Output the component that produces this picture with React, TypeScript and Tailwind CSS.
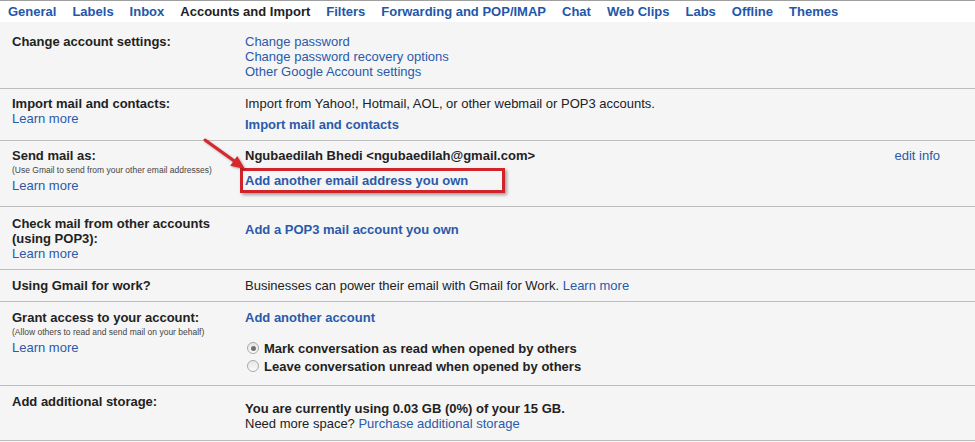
// Gmail settings — "Accounts and Import" tab, with a red annotation
// (arrow + box) pointing at "Add another email address you own".

const LINK = 'text-[#2a5aaa]';

const TABS = [
  'General',
  'Labels',
  'Inbox',
  'Accounts and Import',
  'Filters',
  'Forwarding and POP/IMAP',
  'Chat',
  'Web Clips',
  'Labs',
  'Offline',
  'Themes',
];

function Radio({ checked }: { checked?: boolean }) {
  return (
    <span className="ml-[2px] mr-[5px] inline-flex h-[12px] w-[12px] shrink-0 items-center justify-center rounded-full border border-[#a9a9a9] bg-gradient-to-b from-[#e6e6e6] to-[#fafafa]">
      {checked && <span className="h-[5px] w-[5px] rounded-full bg-[#707070]" />}
    </span>
  );
}

function Arrow() {
  return (
    <svg
      viewBox="0 0 60 45"
      className="pointer-events-none absolute left-[195px] top-[132px] h-[45px] w-[60px] drop-shadow-[1px_1px_1px_rgba(0,0,0,0.35)]"
    >
      <path d="M10 8 L40 29.5" stroke="#d9262b" strokeWidth="3" strokeLinecap="round" />
      <polygon points="50,37 35.2,33.7 42.2,23.9" fill="#d9262b" />
    </svg>
  );
}

export default function App() {
  return (
    <div
      className="relative min-h-screen bg-[#f5f5f5] text-[13px] leading-[15px] text-[#222]"
      style={{ fontFamily: '"Liberation Sans", Arial, sans-serif' }}
    >
      {/* Tab strip */}
      <div className="flex h-[22px] border-t border-[#a0a0a0] bg-white">
        {TABS.map((t) => (
          <span
            key={t}
            className={`px-2 font-bold leading-[21px] ${
              t === 'Accounts and Import' ? 'text-[#222]' : 'text-[#2456a8]'
            }`}
          >
            {t}
          </span>
        ))}
      </div>

      {/* Change account settings */}
      <div className="grid grid-cols-[233px_1fr] pl-3 pr-[35px] pt-[12px] pb-[9px]">
        <div className="font-bold">Change account settings:</div>
        <div className={`flex flex-col ${LINK}`}>
          <span>Change password</span>
          <span>Change password recovery options</span>
          <span>Other Google Account settings</span>
        </div>
      </div>

      {/* Import */}
      <div className="grid grid-cols-[233px_1fr] border-t border-[#bdbdbd] pl-3 pr-[35px] pt-[7px] pb-[8px]">
        <div className="flex flex-col">
          <span className="font-bold">Import mail and contacts:</span>
          <span className={LINK}>Learn more</span>
        </div>
        <div className="flex flex-col">
          <span>Import from Yahoo!, Hotmail, AOL, or other webmail or POP3 accounts.</span>
          <span className={`mt-[6px] font-bold ${LINK}`}>Import mail and contacts</span>
        </div>
      </div>

      {/* Send mail as */}
      <div className="grid grid-cols-[233px_1fr] border-t border-[#bdbdbd] pl-3 pr-[35px] pt-[7px] pb-[13px]">
        <div className="flex flex-col">
          <span className="font-bold">Send mail as:</span>
          <span className="text-[8.5px] text-[#444]">(Use Gmail to send from your other email addresses)</span>
          <span className={LINK}>Learn more</span>
        </div>
        <div className="flex flex-col">
          <div className="flex justify-between">
            <span className="font-bold">Ngubaedilah Bhedi &lt;ngubaedilah@gmail.com&gt;</span>
            <span className={LINK}>edit info</span>
          </div>
          <div className="relative mt-[10px] self-start">
            <span className={`font-bold ${LINK}`}>Add another email address you own</span>
            <span className="pointer-events-none absolute left-[-5px] top-[-5px] h-[25px] w-[265px] border-[3px] border-[#d3232a] shadow-[2px_2px_3px_rgba(0,0,0,0.35)]" />
          </div>
        </div>
      </div>

      {/* POP3 */}
      <div className="grid grid-cols-[233px_1fr] border-t border-[#bdbdbd] pl-3 pr-[35px] pt-[9px] pb-2">
        <div className="flex flex-col">
          <span className="font-bold">Check mail from other accounts</span>
          <span className="font-bold">(using POP3):</span>
          <span className={LINK}>Learn more</span>
        </div>
        <div>
          <div className={`mt-[6px] font-bold ${LINK}`}>Add a POP3 mail account you own</div>
        </div>
      </div>

      {/* Gmail for work */}
      <div className="grid grid-cols-[233px_1fr] border-t border-[#bdbdbd] pl-3 pr-[35px] pt-2 pb-2">
        <div className="font-bold">Using Gmail for work?</div>
        <div>
          Businesses can power their email with Gmail for Work.{' '}
          <span className={LINK}>Learn more</span>
        </div>
      </div>

      {/* Grant access */}
      <div className="grid grid-cols-[233px_1fr] border-t border-[#bdbdbd] pl-3 pr-[35px] pt-2 pb-[10px]">
        <div className="flex flex-col">
          <span className="font-bold">Grant access to your account:</span>
          <span className="text-[8.5px] text-[#444]">(Allow others to read and send mail on your behalf)</span>
          <span className={LINK}>Learn more</span>
        </div>
        <div className="flex flex-col">
          <span className={`font-bold ${LINK}`}>Add another account</span>
          <label className="mt-[14px] flex h-[18px] items-center font-bold">
            <Radio checked />
            Mark conversation as read when opened by others
          </label>
          <label className="flex h-[18px] items-center font-bold">
            <Radio />
            Leave conversation unread when opened by others
          </label>
        </div>
      </div>

      {/* Storage */}
      <div className="grid grid-cols-[233px_1fr] border-y border-[#bdbdbd] pl-3 pr-[35px] pt-2 pb-[9px]">
        <div className="font-bold">Add additional storage:</div>
        <div className="mt-[7px] flex flex-col">
          <span className="font-bold">You are currently using 0.03 GB (0%) of your 15 GB.</span>
          <span>
            Need more space? <span className={LINK}>Purchase additional storage</span>
          </span>
        </div>
      </div>

      <Arrow />
    </div>
  );
}
